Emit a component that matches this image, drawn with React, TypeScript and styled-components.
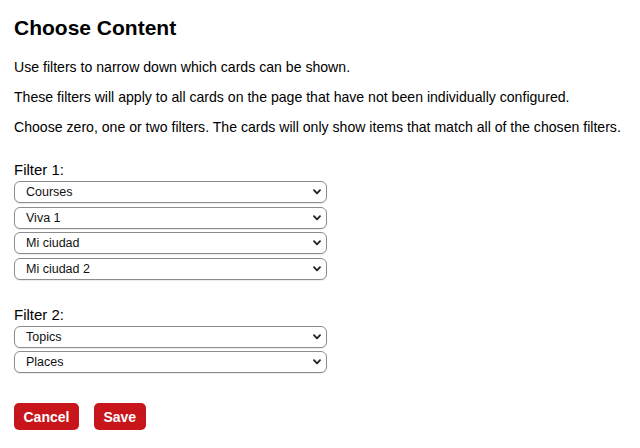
import styled, { createGlobalStyle } from "styled-components";

const GlobalStyle = createGlobalStyle`
  html, body {
    margin: 0;
    padding: 0;
    background: #ffffff;
  }
  body {
    font-family: "Liberation Sans", Arial, sans-serif;
    color: #000000;
  }
`;

const Page = styled.div`
  padding: 14px 14px 0;
`;

const Title = styled.h1`
  margin: 2px 0 0;
  font-size: 21px;
  line-height: 24px;
  font-weight: bold;
`;

const Text = styled.p`
  margin: 19px 0 0;
  font-size: 14.1px;
  line-height: 16px;
  & + & {
    margin-top: 14px;
  }
`;

const FilterGroup = styled.div`
  margin-top: 26px;
  & + & {
    margin-top: 26px;
  }
`;

const Label = styled.div`
  font-size: 15px;
  line-height: 18px;
  margin-bottom: 2px;
`;

const SelectList = styled.div`
  display: flex;
  flex-direction: column;
  gap: 3.5px;
  width: 313px;
`;

const SelectWrap = styled.div`
  position: relative;
`;

const Select = styled.select`
  appearance: none;
  -webkit-appearance: none;
  display: block;
  width: 100%;
  height: 22px;
  padding: 0 24px 0 11px;
  border: 1px solid #8d8d8d;
  border-radius: 6px;
  background: #ffffff;
  font-family: "Liberation Sans", Arial, sans-serif;
  font-size: 12.5px;
  color: #111111;
  box-shadow: 0 1px 1px rgba(0, 0, 0, 0.08);
`;

const Chevron = styled.svg`
  position: absolute;
  right: 6px;
  top: 50%;
  width: 8px;
  height: 6px;
  transform: translateY(-50%);
  pointer-events: none;
`;

const Actions = styled.div`
  display: flex;
  gap: 15px;
  margin-top: 30px;
`;

const Button = styled.button`
  height: 27px;
  padding: 0 9.5px;
  border: none;
  border-radius: 5px;
  background: #c8151b;
  color: #ffffff;
  font-family: "Liberation Sans", Arial, sans-serif;
  font-size: 14px;
  font-weight: bold;
  cursor: pointer;
`;

type FilterProps = {
  label: string;
  options: string[];
};

const Filter = ({ label, options }: FilterProps) => (
  <FilterGroup>
    <Label>{label}</Label>
    <SelectList>
      {options.map((option) => (
        <SelectWrap key={option}>
          <Select defaultValue={option}>
            <option>{option}</option>
          </Select>
          <Chevron viewBox="0 0 8 6">
            <path
              d="M1 1.2 L4 4.4 L7 1.2"
              fill="none"
              stroke="#222"
              strokeWidth="1.8"
              strokeLinecap="round"
              strokeLinejoin="round"
            />
          </Chevron>
        </SelectWrap>
      ))}
    </SelectList>
  </FilterGroup>
);

export default function App() {
  return (
    <>
      <GlobalStyle />
      <Page>
        <Title>Choose Content</Title>
        <Text>Use filters to narrow down which cards can be shown.</Text>
        <Text>
          These filters will apply to all cards on the page that have not been
          individually configured.
        </Text>
        <Text>
          Choose zero, one or two filters. The cards will only show items that
          match all of the chosen filters.
        </Text>
        <Filter
          label="Filter 1:"
          options={["Courses", "Viva 1", "Mi ciudad", "Mi ciudad 2"]}
        />
        <Filter label="Filter 2:" options={["Topics", "Places"]} />
        <Actions>
          <Button>Cancel</Button>
          <Button>Save</Button>
        </Actions>
      </Page>
    </>
  );
}
